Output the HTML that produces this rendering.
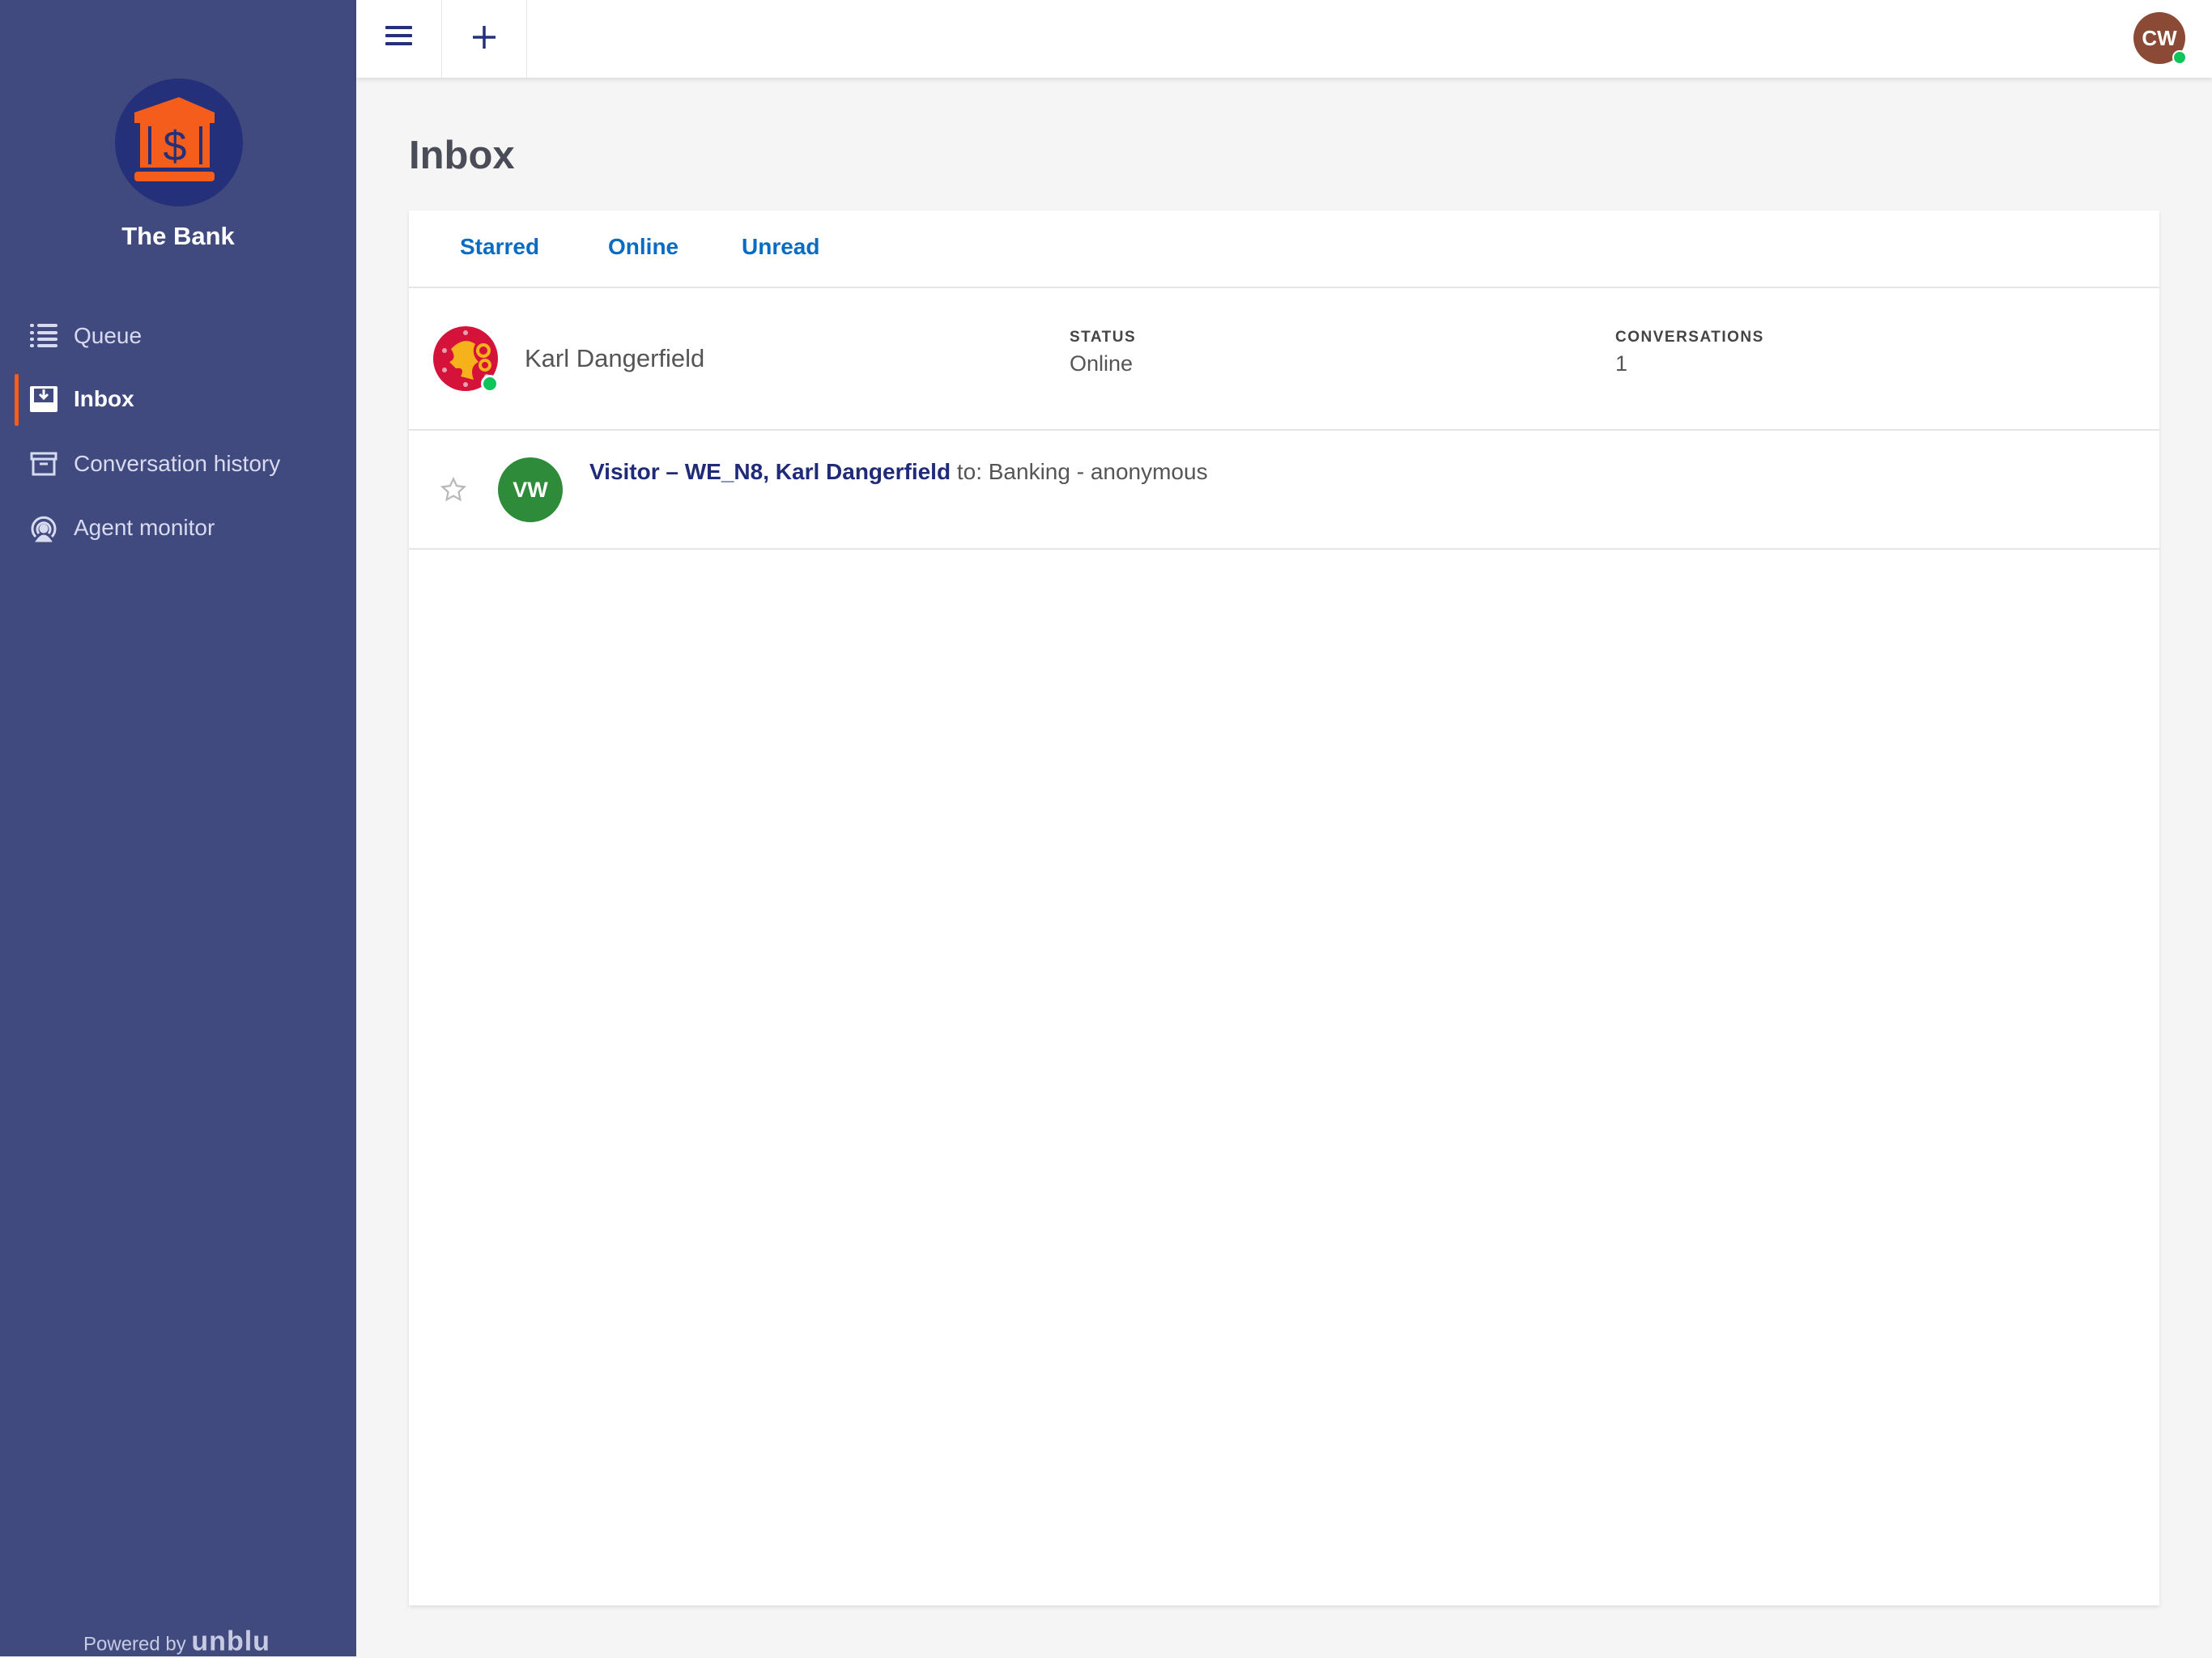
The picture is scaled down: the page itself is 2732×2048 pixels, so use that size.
<!DOCTYPE html>
<html><head><meta charset="utf-8"><style>
*{margin:0;padding:0;box-sizing:border-box}
body{width:2732px;height:2046px;overflow:hidden;background:#f5f5f6;font-family:"Liberation Sans",sans-serif;position:relative}
.sb{position:absolute;left:0;top:0;width:440px;height:2046px;background:#414a7e}
.abs{position:absolute}
.mi{position:absolute;left:91px;font-size:28px;color:#d8dbef;transform:translateY(-50%)}
.top{position:absolute;left:440px;top:0;right:0;height:96px;background:#fff;box-shadow:0 2px 6px rgba(0,0,0,.12)}
.card{position:absolute;left:505px;top:260px;width:2162px;height:1723px;background:#fff;box-shadow:0 2px 5px rgba(0,0,0,.1)}
.tab{position:absolute;top:305px;transform:translateY(-50%);font-size:28px;font-weight:bold;color:#0a6bc2}
.lbl{position:absolute;font-size:19px;font-weight:bold;letter-spacing:1.5px;color:#444}
.val{position:absolute;font-size:27px;color:#555}
</style></head><body>
<div class="sb">
 <svg class="abs" style="left:141px;top:96px" width="160" height="160" viewBox="0 0 160 160">
  <circle cx="80" cy="80" r="79" fill="#25307a"/>
  <path d="M80 24 L124 43 L124 56 L25 56 L25 43Z" fill="#f45d1b"/>
  <rect x="32" y="54" width="86" height="57" fill="#f45d1b"/>
  <rect x="42" y="60" width="4" height="47" fill="#25307a"/>
  <rect x="105" y="60" width="4" height="47" fill="#25307a"/>
  <rect x="25" y="116" width="99" height="12" rx="4" fill="#f45d1b"/>
  <text x="75" y="102" text-anchor="middle" font-size="52" font-family="Liberation Sans" fill="#25307a">$</text>
 </svg>
 <div class="abs" style="left:0;width:440px;top:274px;text-align:center;font-size:31px;font-weight:bold;color:#fff">The Bank</div>
 <svg class="abs" style="left:37px;top:400px" width="34" height="30" viewBox="0 0 34 30" fill="#d8dbef"><rect x="0" y="0" width="5" height="4" rx="2"/><rect x="9" y="0" width="25" height="4" rx="2"/><rect x="0" y="9" width="5" height="4" rx="2"/><rect x="9" y="9" width="25" height="4" rx="2"/><rect x="0" y="17" width="5" height="4" rx="2"/><rect x="9" y="17" width="25" height="4" rx="2"/><rect x="0" y="25" width="5" height="4" rx="2"/><rect x="9" y="25" width="25" height="4" rx="2"/></svg>
 <div class="mi" style="top:415px">Queue</div>
 <div class="abs" style="left:18px;top:462px;width:5px;height:64px;background:#f45d1b;border-radius:2px"></div>
 <svg class="abs" style="left:37px;top:477px" width="34" height="32" viewBox="0 0 34 32"><rect x="0" y="0" width="34" height="32" rx="2" fill="#fff"/><rect x="5" y="3" width="24" height="17" fill="#414a7e"/><path d="M17 4 V15 M12 10 L17 15 L22 10" stroke="#fff" stroke-width="3" fill="none"/></svg>
 <div class="mi" style="top:493px;color:#fff;font-weight:bold">Inbox</div>
 <svg class="abs" style="left:37px;top:558px" width="34" height="30" viewBox="0 0 34 30" fill="none" stroke="#d8dbef" stroke-width="3"><rect x="2" y="2" width="30" height="7"/><rect x="4" y="9" width="26" height="19"/><path d="M12 15 H22"/></svg>
 <div class="mi" style="top:573px">Conversation history</div>
 <svg class="abs" style="left:37px;top:636px" width="34" height="34" viewBox="0 0 34 34" fill="none" stroke="#d8dbef" stroke-width="3"><path d="M7 27 A14 14 0 1 1 27 27"/><path d="M11 23 A8 8 0 1 1 23 23"/><circle cx="17" cy="17" r="4" fill="#d8dbef"/><path d="M9 32 Q17 20 25 32Z" fill="#d8dbef"/></svg>
 <div class="mi" style="top:652px">Agent monitor</div>
 <div class="abs" style="left:103px;top:2028px;transform:translateY(-50%);font-size:24px;color:#c6cae2">Powered by <b style="font-size:34px;letter-spacing:1px">unblu</b></div>
</div>
<div class="top">
 <div class="abs" style="left:105px;top:0;width:1px;height:96px;background:#e6e6e6"></div>
 <div class="abs" style="left:210px;top:0;width:1px;height:96px;background:#e6e6e6"></div>
 <svg class="abs" style="left:36px;top:32px" width="34" height="24" viewBox="0 0 34 24" fill="#25307a"><rect y="0" width="33" height="4" rx="1"/><rect y="10" width="33" height="4" rx="1"/><rect y="20" width="33" height="4" rx="1"/></svg>
 <svg class="abs" style="left:143px;top:31px" width="30" height="30" viewBox="0 0 30 30" stroke="#25307a" stroke-width="3.5"><path d="M15 1V29M1 15H29"/></svg>
 <div class="abs" style="left:2195px;top:15px;width:64px;height:64px;border-radius:50%;background:#8b4a35;color:#fff;font-weight:bold;font-size:26px;line-height:64px;text-align:center">CW</div>
 <div class="abs" style="left:2243px;top:62px;width:18px;height:18px;border-radius:50%;background:#10c45c;border:2px solid #fff"></div>
</div>
<div class="abs" style="left:505px;top:192px;transform:translateY(-50%);font-size:49px;font-weight:bold;color:#4a4d57">Inbox</div>
<div class="card">
 <div class="abs" style="left:0;right:0;top:94px;height:2px;background:#e6e6e8"></div>
 <div class="abs" style="left:0;right:0;top:270px;height:2px;background:#e6e6e8"></div>
 <div class="abs" style="left:0;right:0;top:417px;height:2px;background:#e6e6e8"></div>
</div>
<div class="tab" style="left:568px">Starred</div>
<div class="tab" style="left:751px">Online</div>
<div class="tab" style="left:916px">Unread</div>
<svg class="abs" style="left:535px;top:403px" width="80" height="80" viewBox="0 0 80 80"><circle cx="40" cy="40" r="40" fill="#d5133a"/><path d="M22 28 Q38 12 52 22 Q46 34 56 44 Q44 50 50 66 L34 62 Q40 50 28 52 L20 44 Q30 40 22 28Z" fill="#f5b21b"/><circle cx="62" cy="30" r="7" fill="none" stroke="#f5b21b" stroke-width="4"/><circle cx="64" cy="48" r="6" fill="none" stroke="#f5b21b" stroke-width="4"/><g fill="#e8a0b0"><circle cx="14" cy="30" r="3"/><circle cx="14" cy="54" r="3"/><circle cx="40" cy="8" r="3"/><circle cx="40" cy="72" r="3"/><circle cx="66" cy="62" r="3"/></g></svg>
<div class="abs" style="left:594px;top:463px;width:22px;height:22px;border-radius:50%;background:#10c45c;border:3px solid #fff"></div>
<div class="abs" style="left:648px;top:443px;transform:translateY(-50%);font-size:31px;color:#555">Karl Dangerfield</div>
<div class="lbl" style="left:1321px;top:406px">STATUS</div>
<div class="val" style="left:1321px;top:434px">Online</div>
<div class="lbl" style="left:1995px;top:406px">CONVERSATIONS</div>
<div class="val" style="left:1995px;top:434px">1</div>
<svg class="abs" style="left:543px;top:588px" width="34" height="34" viewBox="0 0 24 24" fill="none" stroke="#b8b8bd" stroke-width="1.6"><path d="M12 2.5l2.9 6.1 6.6.8-4.9 4.6 1.3 6.6L12 17.3l-5.9 3.3 1.3-6.6L2.5 9.4l6.6-.8z"/></svg>
<div class="abs" style="left:615px;top:565px;width:80px;height:80px;border-radius:50%;background:#2e8b3a;color:#fff;font-weight:bold;font-size:27px;line-height:80px;text-align:center">VW</div>
<div class="abs" style="left:728px;top:583px;transform:translateY(-50%);font-size:28px;color:#555;white-space:nowrap"><b style="color:#1f2a78;font-weight:bold">Visitor – WE_N8, Karl Dangerfield</b> to: Banking - anonymous</div>
</body></html>
